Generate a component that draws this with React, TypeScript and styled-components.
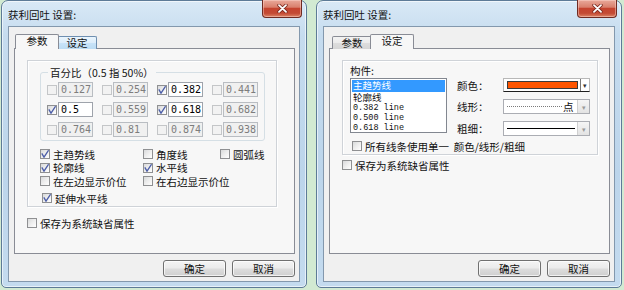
import React from 'react';
import styled, { createGlobalStyle, css } from 'styled-components';

const CJK = `"Noto Sans CJK SC", "Noto Sans", sans-serif`;
const MONO = `"DejaVu Sans Mono", "Liberation Mono", monospace`;

const GlobalStyle = createGlobalStyle`
  html, body {
    margin: 0;
    padding: 0;
  }
  body {
    background: #d2ead2;
    font-family: ${CJK};
    font-size: 10.5px;
    color: #111;
  }
`;

const levels = [
  [
    { value: '0.127', on: false },
    { value: '0.254', on: false },
    { value: '0.382', on: true },
    { value: '0.441', on: false },
  ],
  [
    { value: '0.5', on: true },
    { value: '0.559', on: false },
    { value: '0.618', on: true },
    { value: '0.682', on: false },
  ],
  [
    { value: '0.764', on: false },
    { value: '0.81', on: false },
    { value: '0.874', on: false },
    { value: '0.938', on: false },
  ],
];

const lineOptions = [
  [
    { label: '主趋势线', on: true },
    { label: '角度线', on: false },
    { label: '圆弧线', on: false },
  ],
  [{ label: '轮廓线', on: true }, { label: '水平线', on: true }, null],
  [{ label: '在左边显示价位', on: false }, { label: '在右边显示价位', on: false }, null],
];

const parts = [
  { label: '主趋势线', mono: false },
  { label: '轮廓线', mono: false },
  { label: '0.382 line', mono: true },
  { label: '0.500 line', mono: true },
  { label: '0.618 line', mono: true },
];

const CheckMark = () => (
  <svg width="8" height="8" viewBox="0 0 8 8">
    <path d="M0.8 3.4 L3 7.2 L7.6 0.2" fill="none" stroke="#4c5ea8" strokeWidth="1.3" />
  </svg>
);

const CloseGlyph = () => (
  <svg width="11" height="9" viewBox="0 0 11 9">
    <path d="M2 1.2 L9 7.8 M9 1.2 L2 7.8" stroke="#7c2c22" strokeWidth="3.4" strokeLinecap="round" />
    <path d="M2 1.2 L9 7.8 M9 1.2 L2 7.8" stroke="#ffffff" strokeWidth="1.8" strokeLinecap="round" />
  </svg>
);

const Check: React.FC<{ on?: boolean; disabled?: boolean }> = ({ on, disabled }) => (
  <CheckBox $disabled={disabled}>{on && <CheckMark />}</CheckBox>
);

const Option: React.FC<{ label: string; on?: boolean }> = ({ label, on }) => (
  <CheckItem>
    <Check on={on} />
    <span>{label}</span>
  </CheckItem>
);

const DialogFrame: React.FC<{ active: 'params' | 'setup'; children: React.ReactNode }> = ({ active, children }) => (
  <Window>
    <TitleBar>
      <Title>获利回吐 设置:</Title>
      <CloseButton>
        <CloseGlyph />
      </CloseButton>
    </TitleBar>
    <Client>
      <TabRow>
        <Tab $selected={active === 'params'}>参数</Tab>
        <Tab $selected={active === 'setup'} $hover={active === 'params'}>
          设定
        </Tab>
      </TabRow>
      <Panel>{children}</Panel>
      <ButtonRow>
        <PushButton>确定</PushButton>
        <PushButton>取消</PushButton>
      </ButtonRow>
    </Client>
  </Window>
);

const ParamsDialog = () => (
  <DialogFrame active="params">
    <EtchedFrame $width={250} $height={147}>
      <Ratios>
        <RatioLegend>百分比（0.5 指 50%）</RatioLegend>
        <RatioGrid>
          {levels.flat().map((level) => (
            <RatioCell key={level.value}>
              <Check on={level.on} disabled={!level.on} />
              <ValueBox $enabled={level.on}>{level.value}</ValueBox>
            </RatioCell>
          ))}
        </RatioGrid>
      </Ratios>
      <OptionGrid>
        {lineOptions.flat().map((opt, i) => (opt ? <Option key={opt.label} label={opt.label} on={opt.on} /> : <span key={i} />))}
      </OptionGrid>
      <ExtendRow>
        <Option label="延伸水平线" on />
      </ExtendRow>
    </EtchedFrame>
    <SaveRow $gap={9.5}>
      <Option label="保存为系统缺省属性" />
    </SaveRow>
  </DialogFrame>
);

const SetupDialog = () => (
  <DialogFrame active="setup">
    <EtchedFrame $width={256} $height={95}>
      <FrameLabel>构件:</FrameLabel>
      <PartsBody>
        <ListBox>
          {parts.map((p, i) => (
            <ListItem key={p.label} $selected={i === 0} $mono={p.mono}>
              {p.label}
            </ListItem>
          ))}
        </ListBox>
        <StyleGrid>
          <FieldLabel>颜色：</FieldLabel>
          <ColorCombo>
            <Swatch />
            <ColorArrow>▾</ColorArrow>
          </ColorCombo>
          <FieldLabel>线形：</FieldLabel>
          <Combo>
            <Sample>
              <SampleLine $dotted />
              <SampleText>点</SampleText>
            </Sample>
            <DropButton>▾</DropButton>
          </Combo>
          <FieldLabel>粗细：</FieldLabel>
          <Combo>
            <Sample>
              <SampleLine />
            </Sample>
            <DropButton>▾</DropButton>
          </Combo>
        </StyleGrid>
      </PartsBody>
      <SingleRow>
        <Option label="所有线条使用单一  颜色/线形/粗细" />
      </SingleRow>
    </EtchedFrame>
    <SaveRow $gap={3.5}>
      <Option label="保存为系统缺省属性" />
    </SaveRow>
  </DialogFrame>
);

const App = () => (
  <>
    <GlobalStyle />
    <Desktop>
      <ParamsDialog />
      <SetupDialog />
    </Desktop>
  </>
);

const Desktop = styled.div`
  display: flex;
  gap: 9px;
  width: 624px;
  height: 290px;
  padding-left: 1px;
  box-sizing: border-box;
  background: #d2ead2;
`;

const Window = styled.div`
  display: flex;
  flex-direction: column;
  box-sizing: border-box;
  width: 306px;
  height: 288px;
  padding: 0 6px 5px;
  border: 1px solid #5d7b97;
  border-radius: 7px 7px 5px 5px;
  background: linear-gradient(180deg, #d9e9f6 0%, #c6dcef 12%, #bcd5eb 60%, #c4dbef 100%);
  box-shadow: inset 0 0 0 1px rgba(255, 255, 255, 0.6);
`;

const TitleBar = styled.div`
  display: flex;
  align-items: center;
  justify-content: space-between;
  height: 25px;
`;

const Title = styled.div`
  font-size: 10.5px;
  line-height: 13px;
  padding-top: 1px;
  color: #111;
`;

const CloseButton = styled.div`
  align-self: flex-start;
  display: flex;
  align-items: center;
  justify-content: center;
  box-sizing: border-box;
  width: 40px;
  height: 18px;
  margin: -1px -2px 0 0;
  border: 1px solid #6f2b22;
  border-top: none;
  border-radius: 0 0 4px 4px;
  background: linear-gradient(180deg, #e9a99a 0%, #d9806d 42%, #c5442f 50%, #c34a34 78%, #dc8466 100%);
  box-shadow: inset 0 0 0 1px rgba(255, 220, 210, 0.45);
`;

const Client = styled.div`
  display: flex;
  flex-direction: column;
  flex: 1;
  border: 1px solid #8398ad;
  background: #f0f0f0;
`;

const TabRow = styled.div`
  position: relative;
  z-index: 1;
  display: flex;
  align-items: flex-end;
  height: 15px;
  margin-top: 7px;
  padding-left: 8px;
`;

const Tab = styled.div<{ $selected?: boolean; $hover?: boolean }>`
  display: flex;
  align-items: center;
  justify-content: center;
  box-sizing: border-box;
  width: 40px;
  height: 13px;
  border: 1px solid #898c95;
  border-bottom: none;
  border-radius: 2px 2px 0 0;
  font-size: 10.5px;
  line-height: 12px;
  background: linear-gradient(180deg, #f3f3f3 0%, #ebebeb 50%, #dddddd 51%, #d6d6d6 100%);
  ${(p) =>
    p.$hover &&
    css`
      border-color: #6f8fb0;
      background: linear-gradient(180deg, #eaf5fd 0%, #dcedfb 50%, #c8e3f8 51%, #bcdcf4 100%);
    `}
  ${(p) =>
    p.$selected &&
    css`
      position: relative;
      width: 44px;
      height: 15px;
      margin: 0 -2px;
      z-index: 2;
      padding-bottom: 2px;
      background: #f7f7f7;
    `}
`;

const Panel = styled.div`
  display: flex;
  flex-direction: column;
  box-sizing: border-box;
  height: 206px;
  margin: -1px 4px 0 5px;
  border: 1px solid #898c95;
  background: #f7f7f7;
`;

const ButtonRow = styled.div`
  display: flex;
  justify-content: flex-end;
  gap: 6px;
  margin: 6px 4px 0 0;
`;

const PushButton = styled.div`
  display: flex;
  align-items: center;
  justify-content: center;
  box-sizing: border-box;
  width: 63px;
  height: 17px;
  border: 1px solid #707070;
  border-radius: 3px;
  font-size: 10.5px;
  background: linear-gradient(180deg, #f4f4f4 0%, #ebebeb 48%, #dddddd 52%, #cfcfcf 100%);
  box-shadow: inset 0 0 0 1px rgba(255, 255, 255, 0.7);
`;

const EtchedFrame = styled.div<{ $width: number; $height: number }>`
  display: flex;
  flex-direction: column;
  box-sizing: border-box;
  width: ${(p) => p.$width}px;
  height: ${(p) => p.$height}px;
  margin: 11px 0 0 12px;
  border: 1px solid #cfd3d8;
  box-shadow: inset 1px 1px 0 #ffffff, 1px 1px 0 #ffffff;
`;

const Ratios = styled.fieldset`
  box-sizing: border-box;
  width: 225px;
  min-width: 0;
  margin: 5px 0 0 12px;
  padding: 0 0 3px 6px;
  border: 1px solid #d5dfe5;
  border-radius: 3px;
`;

const RatioLegend = styled.legend`
  margin-left: 1px;
  padding: 0 2px;
  font-size: 10.5px;
  line-height: 13px;
`;

const RatioGrid = styled.div`
  display: grid;
  grid-template-columns: repeat(4, 46px);
  column-gap: 9px;
  row-gap: 5px;
  margin-top: 3px;
`;

const RatioCell = styled.div`
  display: flex;
  align-items: center;
  gap: 1px;
  height: 15px;
`;

const ValueBox = styled.div<{ $enabled?: boolean }>`
  box-sizing: border-box;
  width: 35px;
  height: 15px;
  padding-left: 2px;
  border: 1px solid ${(p) => (p.$enabled ? '#9ea3ab' : '#b9bdc2')};
  background: ${(p) => (p.$enabled ? '#ffffff' : '#f0f0f0')};
  color: ${(p) => (p.$enabled ? '#000000' : '#7d7d7d')};
  font-family: ${MONO};
  font-size: 10px;
  line-height: 13px;
`;

const CheckBox = styled.span<{ $disabled?: boolean }>`
  display: inline-flex;
  align-items: center;
  justify-content: center;
  flex: none;
  box-sizing: border-box;
  width: 10px;
  height: 10px;
  border: 1px solid ${(p) => (p.$disabled ? '#c4c6c8' : '#8f9092')};
  background: ${(p) =>
    p.$disabled ? '#f2f2f2' : 'linear-gradient(135deg, #d9dadb 0%, #eeeeee 50%, #ffffff 100%)'};
`;

const CheckItem = styled.div`
  display: flex;
  align-items: center;
  gap: 3px;
  height: 13.5px;
  font-size: 10.5px;
  line-height: 13px;
  white-space: pre;
`;

const OptionGrid = styled.div`
  display: grid;
  grid-template-columns: 103px 77px auto;
  margin: 6.5px 0 0 12px;
`;

const ExtendRow = styled.div`
  margin: 3.5px 0 0 14px;
`;

const SaveRow = styled.div<{ $gap: number }>`
  margin: ${(p) => p.$gap}px 0 0 12px;
`;

const FrameLabel = styled.div`
  margin: 3px 0 0 7px;
  font-size: 10.5px;
  line-height: 13px;
`;

const PartsBody = styled.div`
  display: flex;
  align-items: flex-start;
  margin: 1px 0 0 7px;
`;

const ListBox = styled.div`
  box-sizing: border-box;
  width: 97px;
  height: 55px;
  padding: 1px;
  border: 1px solid #828790;
  background: #ffffff;
  overflow: hidden;
`;

const ListItem = styled.div<{ $selected?: boolean; $mono?: boolean }>`
  height: ${(p) => (p.$mono ? '10px' : '11.5px')};
  padding-left: 1px;
  font-family: ${(p) => (p.$mono ? `"Liberation Mono", "DejaVu Sans Mono", monospace` : CJK)};
  font-size: ${(p) => (p.$mono ? '8.5px' : '9.5px')};
  line-height: ${(p) => (p.$mono ? '10px' : '11.5px')};
  white-space: pre;
  ${(p) =>
    p.$selected &&
    css`
      background: #3399ff;
      color: #ffffff;
    `}
`;

const StyleGrid = styled.div`
  display: grid;
  grid-template-columns: 46px 87px;
  grid-template-rows: 14px 15px 15px;
  row-gap: 7px;
  margin-left: 10px;
`;

const FieldLabel = styled.div`
  display: flex;
  align-items: center;
  font-size: 10.5px;
`;

const ColorCombo = styled.div`
  display: flex;
  align-items: stretch;
  box-sizing: border-box;
  border: 1px solid #b8b8b8;
  border-bottom-color: #1f1f1f;
  background: #ffffff;
`;

const Swatch = styled.div`
  flex: 1;
  margin: 2px 2px 2px 3px;
  border: 1px solid #3a3a3a;
  background: #ff5500;
`;

const ColorArrow = styled.div`
  display: flex;
  align-items: center;
  justify-content: center;
  width: 8px;
  border-left: 1px solid #777777;
  font-size: 7px;
  color: #333;
`;

const Combo = styled.div`
  display: flex;
  box-sizing: border-box;
  border: 1px solid #abadb3;
  background: #ffffff;
`;

const Sample = styled.div`
  display: flex;
  align-items: center;
  flex: 1;
  gap: 1px;
  padding: 0 2px 0 3px;
  overflow: hidden;
`;

const SampleLine = styled.div<{ $dotted?: boolean }>`
  flex: 1;
  border-top: 1px ${(p) => (p.$dotted ? 'dotted #7a7a7a' : 'solid #000000')};
`;

const SampleText = styled.div`
  width: 12px;
  font-size: 10.5px;
  line-height: 12px;
  white-space: nowrap;
`;

const DropButton = styled.div`
  display: flex;
  align-items: center;
  justify-content: center;
  width: 11px;
  border-left: 1px solid #d0d0d0;
  background: linear-gradient(180deg, #f5f5f5, #e3e3e3);
  font-size: 7px;
  color: #9a9a9a;
`;

const SingleRow = styled.div`
  margin: 3.5px 0 0 9px;
`;

export default App;
